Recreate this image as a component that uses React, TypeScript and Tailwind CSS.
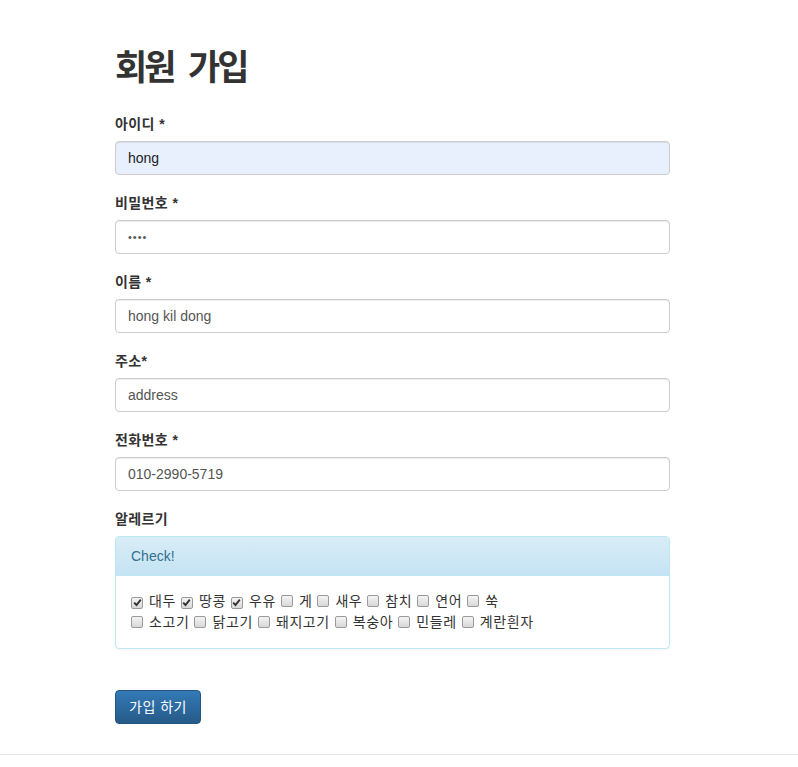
import React from "react";

const font = {
  fontFamily: '"Liberation Sans", "Noto Sans CJK KR", sans-serif',
};

type Field = {
  label: string;
  value: string;
  autofill?: boolean;
  password?: boolean;
};

const fields: Field[] = [
  { label: "아이디 *", value: "hong", autofill: true },
  { label: "비밀번호 *", value: "••••", password: true },
  { label: "이름 *", value: "hong kil dong" },
  { label: "주소*", value: "address" },
  { label: "전화번호 *", value: "010-2990-5719" },
];

const allergies1: [string, boolean][] = [
  ["대두", true],
  ["땅콩", true],
  ["우유", true],
  ["게", false],
  ["새우", false],
  ["참치", false],
  ["연어", false],
  ["쑥", false],
];

const allergies2: [string, boolean][] = [
  ["소고기", false],
  ["닭고기", false],
  ["돼지고기", false],
  ["복숭아", false],
  ["민들레", false],
  ["계란흰자", false],
];

function Box({ checked }: { checked: boolean }) {
  return (
    <span className="inline-flex h-[12px] w-[12px] items-center justify-center rounded-[2px] border border-[#9a9a9a] bg-gradient-to-b from-[#f4f4f4] to-[#d8d8d8] align-[-1px]">
      {checked && (
        <svg width="9" height="9" viewBox="0 0 9 9">
          <path d="M1.2 4.6 L3.5 7 L7.8 1.6" fill="none" stroke="#333" strokeWidth="1.9" />
        </svg>
      )}
    </span>
  );
}

function Row({ items }: { items: [string, boolean][] }) {
  return (
    <div className="leading-[21px]">
      {items.map(([name, checked]) => (
        <span key={name} className="mr-[5px]">
          <Box checked={checked} />
          <span className="ml-[6px] tracking-[0.6px]">{name}</span>
        </span>
      ))}
    </div>
  );
}

export default function App() {
  return (
    <div className="min-h-[767px] bg-white text-[14px] text-[#333]" style={font}>
      <div className="ml-[115px] w-[555px]">
        <h1 className="pt-[48px] text-[35px] font-bold leading-[40px] tracking-[-3px] text-[#333] [word-spacing:8px]">
          회원 가입
        </h1>

        <form className="mt-[23px]">
          {fields.map((f) => (
            <div key={f.label} className="mb-[15px]">
              <label className="mb-[5px] block pt-[2px] font-semibold leading-[23px] tracking-[0.4px]">{f.label}</label>
              <div
                className={`flex h-[34px] items-center rounded-[4px] border border-[#ccc] px-[12px] shadow-[inset_0_1px_1px_rgba(0,0,0,0.075)] ${
                  f.autofill ? "bg-[#e8f0fe] text-[#222]" : "bg-white text-[#555]"
                }`}
              >
                <span className={f.password ? "text-[11px] tracking-[1px]" : ""}>{f.value}</span>
              </div>
            </div>
          ))}

          <div>
            <label className="mb-[5px] block pt-[2px] font-semibold leading-[23px] tracking-[0.4px]">알레르기</label>
            <div className="rounded-[4px] border border-[#bce8f1] shadow-[0_1px_2px_rgba(0,0,0,0.05)]">
              <div className="rounded-t-[3px] border-b border-[#bce8f1] bg-gradient-to-b from-[#d9edf7] to-[#c4e3f3] px-[15px] py-[9px] leading-[20px] text-[#31708f]">
                Check!
              </div>
              <div className="px-[15px] py-[15px]">
                <Row items={allergies1} />
                <Row items={allergies2} />
              </div>
            </div>
          </div>

          <button
            type="button"
            className="mt-[41px] h-[34px] w-[86px] rounded-[4px] border border-[#245580] bg-gradient-to-b from-[#337ab7] to-[#265a88] leading-[20px] tracking-[0.5px] text-white"
          >
            가입 하기
          </button>
        </form>
      </div>
      <hr className="mt-[30px] border-t border-[#e5e5e5]" />
    </div>
  );
}
